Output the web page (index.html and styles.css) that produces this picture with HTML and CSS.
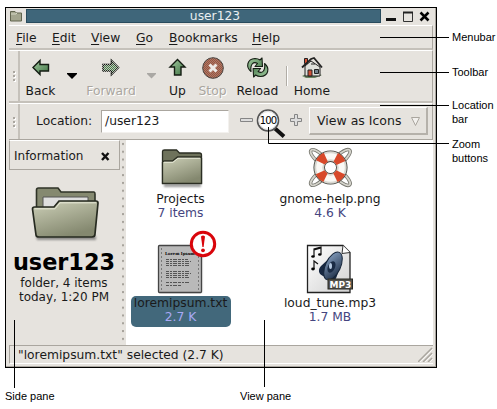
FILE: index.html
```html
<!DOCTYPE html>
<html lang="en">
<head>
<meta charset="utf-8">
<title>user123</title>
<link rel="stylesheet" href="styles.css">
</head>
<body>
<svg class="defs" width="0" height="0" aria-hidden="true">
  <defs>
    <linearGradient id="folder" x1="0" y1="0" x2="0.5" y2="1"><stop offset="0" stop-color="#cdd0b8"/><stop offset="1" stop-color="#84886f"/></linearGradient>
    <linearGradient id="green" x1="0" y1="0" x2="1" y2="1"><stop offset="0" stop-color="#a4cca2"/><stop offset="1" stop-color="#3f7343"/></linearGradient>
    <linearGradient id="page" x1="0" y1="0" x2="1" y2="1"><stop offset="0" stop-color="#fff"/><stop offset="1" stop-color="#d0d0d0"/></linearGradient>
    <linearGradient id="cone" x1="0" y1="0" x2="1" y2="1"><stop offset="0" stop-color="#8ba5c6"/><stop offset="1" stop-color="#16263e"/></linearGradient>
    <pattern id="dither" width="2" height="2" patternUnits="userSpaceOnUse"><rect width="1" height="1" fill="#e6e3de"/><rect x="1" y="1" width="1" height="1" fill="#e6e3de"/></pattern>
    <filter id="soft" x="-20%" y="-50%" width="140%" height="200%"><feGaussianBlur stdDeviation="1.2"/></filter>
  </defs>
</svg>
<main class="window">
  <header class="titlebar">
    <svg class="app-icon" width="14" height="14"><path d="M1.500 12V2.500H6L7.500 4H12.500V12Z" fill="#a3a58e" stroke="#62654f"/><path d="M2 5h5l1-1" fill="none" stroke="#d6d8c5"/></svg>
    <div class="title">user123</div>
    <svg class="window-buttons" width="50" height="15"><path d="M3 10.500h10" stroke="#111" stroke-width="3"/><path d="M20.500 3.500h9v9h-9z" fill="none" stroke="#333"/><path d="M20 3.500h10" stroke="#222" stroke-width="2"/><path d="M37.500 3.500l8 8m0-8l-8 8" stroke="#000" stroke-width="2.500"/></svg>
  </header>
  <nav class="menubar"><span class="m-file"><u>F</u>ile</span><span class="m-edit"><u>E</u>dit</span><span class="m-view"><u>V</u>iew</span><span class="m-go"><u>G</u>o</span><span class="m-book"><u>B</u>ookmarks</span><span class="m-help"><u>H</u>elp</span></nav>
  <section class="toolbar">
    <div class="grip"><i></i><i></i><i></i></div>
    <div class="tool back"><svg width="24" height="24"><path d="M4 11.500L11 4.500V8.500H19.500V15H11V18.500Z" fill="url(#green)" stroke="#141d13" stroke-width="1.400"/></svg><span>Back</span></div>
    <div class="drop"><svg width="11" height="6"><path d="M0 0h10v1L5 6 0 1z" fill="#000"/></svg></div>
    <div class="tool forward disabled"><svg width="24" height="24"><path d="M19.500 11.500L12.500 4.500V8.500H4V15H12.500V18.500Z" fill="#487a4b" stroke="#101410" stroke-width="1.600"/><path d="M21 11.500L12.500 3V8H3V16H12.500V20Z" fill="url(#dither)" opacity=".75"/></svg><span>Forward</span></div>
    <div class="drop off"><svg width="11" height="6"><path d="M1 0h9v1L5.500 5.500 1 1z" fill="#aaa8a4"/></svg></div>
    <div class="tool up"><svg width="24" height="24"><path d="M11.500 3.500L19 11H15V19H8.500V11H4Z" fill="url(#green)" stroke="#141d13" stroke-width="1.400"/></svg><span>Up</span></div>
    <div class="tool stop disabled"><svg width="24" height="24"><circle cx="12" cy="12" r="10.300" fill="#985540" stroke="#46413e"/><circle cx="12" cy="12" r="10" fill="url(#dither)" opacity=".25"/><path d="M8.500 8.500l7 7m0-7l-7 7" stroke="#eeeae6" stroke-width="3"/></svg><span>Stop</span></div>
    <div class="tool reload"><svg width="24" height="24"><g stroke="#141d13" stroke-width="1.100" fill="url(#green)" stroke-linejoin="round"><path d="M5 15.500C-.5 11 1 3 9 2.500q3 0 5 1.500l2-2 .5 8.500H9l2.500-3C7.500 5 4 8 5 15.500Z"/><path d="M5 15.500C-.5 11 1 3 9 2.500q3 0 5 1.500l2-2 .5 8.500H9l2.500-3C7.500 5 4 8 5 15.500Z" transform="rotate(180 11.800 11.500)"/></g></svg><span>Reload</span></div>
    <div class="rule"></div>
    <div class="tool home"><svg width="24" height="24"><path d="M2 20l8-4 12 3-7 3H6z" fill="#6c8662"/><path d="M5 10l6-5 9 6v9H5z" fill="#dfe0db" stroke="#222"/><path d="M4.500 2.500h3v5h-3z" fill="#d65033" stroke="#222"/><path d="M2 11.500L11 3l3-1 8 9.500" fill="none" stroke="#222" stroke-width="1.800"/><path d="M8 14h4v6H8z" fill="#ce4f37" stroke="#222"/><path d="M14.500 13.500h4v4h-4z" fill="#71818c" stroke="#222"/><path d="M11 8h4" stroke="#222"/></svg><span>Home</span></div>
  </section>
  <section class="location">
    <div class="grip"><i></i><i></i><i></i></div>
    <label>Location:</label>
    <div class="field">/user123</div>
    <svg class="zoom-controls" width="70" height="30"><path d="M5.500 10.500h12v3h-12z" fill="#ddd" stroke="#858585"/><path d="M40 20.500l9 8" stroke="#111" stroke-width="4"/><circle cx="33" cy="12.500" r="10.500" fill="#fff" stroke="#555" stroke-width="1.600"/><circle cx="33" cy="12.500" r="9" fill="none" stroke="#ddd"/><text x="24.800" y="16.200" class="zoom-text">100</text><path d="M59.500 6.500h3v4h4v3h-4v4h-3v-4h-4v-3h4z" fill="#ddd" stroke="#858585"/></svg>
    <div class="view-button"><span>View as Icons</span><svg width="11" height="11"><path d="M1.500 1.500h8L5.500 9.500z" fill="#f2f0ed" stroke="#aaa69f"/></svg></div>
  </section>
  <section class="content">
    <aside class="sidepane">
      <div class="pane-head"><span>Information</span><svg width="9" height="9"><path d="M1 1l6.500 7m0-7L1 8" stroke="#111" stroke-width="2.400"/></svg></div>
      <svg class="big-folder" width="72" height="58"><path d="M8 51h60v4H9z" fill="#555" opacity=".6" filter="url(#soft)"/><path d="M8.500 46V5q0-2 2-2H30l3 4h33q1 0 1 2v37z" fill="#858970" stroke="#2f3327" stroke-width="1.600"/><path d="M15 12h45v25H15z" fill="#dfdfdf" stroke="#555"/><path d="M8 50L4.500 24q0-2 2-2h19.500l5-6h37q2 0 2 2l-3 31q0 3-3 3H11q-3 0-3-2z" fill="url(#folder)" stroke="#262a20" stroke-width="1.700"/><path d="M6.500 23.800h20.500l5-6h36" fill="none" stroke="#e9ead9"/></svg>
      <h1>user123</h1>
      <p>folder, 4 items<br>today, 1:20 PM</p>
    </aside>
    <div class="divider"></div>
    <section class="files">
      <article class="file"><div class="art"><svg width="50" height="50"><path d="M8 43h37v3H8z" fill="#555" opacity=".6" filter="url(#soft)"/><path d="M6.500 42V10.500q0-1.500 2-1.500h12l3 3h20q2 0 2 2v28z" fill="#6e725b" stroke="#2b2e23" stroke-width="1.300"/><path d="M6.500 42.500V21q0-1 2-1h8l5-4h23q1 0 1 1v25.500z" fill="url(#folder)" stroke="#2b2e23" stroke-width="1.300"/><path d="M8 21.300h9l5-4h22" fill="none" stroke="#e6e8d6"/></svg></div><b>Projects</b><em>7 items</em></article>
      <article class="file"><div class="art"><svg width="50" height="50"><g fill="none"><path d="M14 22C-2 8 8 4 18 15M32 15C44 4 52 8 37 22M14 31C-2 45 8 49 18 38M32 38C44 49 52 45 37 31" stroke="#77776f" stroke-width="3.500"/><path d="M14 22C-2 8 8 4 18 15M32 15C44 4 52 8 37 22M14 31C-2 45 8 49 18 38M32 38C44 49 52 45 37 31" stroke="#d5d4cc" stroke-width="1.800"/><circle cx="25.500" cy="26.500" r="11.300" stroke="#44453f" stroke-width="11.500"/><circle cx="25.500" cy="26.500" r="11.300" stroke="#d9d8d1" stroke-width="9.800"/><circle cx="25.500" cy="26.500" r="11.300" stroke="#faf9f5" stroke-width="6"/><circle cx="25.500" cy="26.500" r="11.300" stroke="#d8492a" stroke-width="9.800" stroke-dasharray="7.600 10.150" transform="rotate(25.700 25.500 26.500)"/></g></svg></div><b>gnome-help.png</b><em>4.6 K</em></article>
      <article class="file selected"><div class="art"><svg width="50" height="50"><path d="M4 5h42v44H4z" fill="#777" opacity=".4" filter="url(#soft)"/><rect x="2.500" y="1.500" width="43" height="47" rx="1" fill="#b9b9b9" stroke="#444" stroke-width="1.300"/><path d="M5.500 4v42m37-42v42" stroke="#777" stroke-dasharray="2"/><text x="9" y="11" class="doc-title">Lorem Ipsum</text><path d="M10 15.500h22M10 17.500h25M10 19.500h23M10 21.500h24M10 27.500h24M10 29.500h25M10 31.500h22M10 33.500h24M10 38.500h23M10 41.500h16" stroke="#555" stroke-dasharray="3 1 2 1 4 1"/></svg><svg class="badge" width="28" height="28"><circle cx="14" cy="14" r="11.700" fill="#fff" stroke="#d9050b" stroke-width="3"/><path d="M12 6.500q2-2 4 0L14.600 17h-1.200z" fill="#d9050b"/><circle cx="14" cy="20.300" r="1.900" fill="#d9050b"/></svg></div><div class="caption"><b>loremipsum.txt</b><em>2.7 K</em></div></article>
      <article class="file"><div class="art"><svg width="50" height="50"><path d="M2.500 1.500H38l7 7v40H2.500z" fill="url(#page)" stroke="#222" stroke-width="1.300"/><path d="M38 1.500l-1 8 8-1" fill="#fff" stroke="#333"/><path d="M9 12V5l7-2v7M9 6l7-2M9 25v-8l4 3" fill="none" stroke="#111" stroke-width="1.200"/><ellipse cx="8" cy="12.500" rx="1.800" ry="1.300"/><ellipse cx="14.800" cy="10.500" rx="1.800" ry="1.300"/><ellipse cx="8" cy="25" rx="1.800" ry="1.400"/><path d="M16 22L31 8c4 2 4 24-2 29L18 32c-5-2-5-7-2-10z" fill="#172740"/><ellipse cx="28" cy="22" rx="7.500" ry="15" transform="rotate(25 28 22)" fill="url(#cone)" stroke="#15253a"/><ellipse cx="26.500" cy="23" rx="3.500" ry="6" transform="rotate(25 26.500 23)" fill="#1a2b44"/><ellipse cx="25.500" cy="22" rx="1.500" ry="3" fill="#b6c9e0"/><rect x="23" y="35" width="24.500" height="10" fill="#53534c" stroke="#282822"/><text x="24.500" y="43.500" class="mp3">MP3</text></svg></div><b>loud_tune.mp3</b><em>1.7 MB</em></article>
    </section>
  </section>
  <footer class="status"><span>"loremipsum.txt" selected (2.7 K)</span><svg width="15" height="15"><path d="M0 15L14 1M5 15l9-9m-4 9l4-4" stroke="#aaa69f" stroke-width="1.500"/><path d="M2 15L15 2M7 15l8-8m-3 8l3-3" stroke="#fff" stroke-width=".7"/></svg></footer>
</main>
<svg class="leaders" width="497" height="409"><path d="M380 37.500h69M380 72.500h69M380 105.500h69M268.500 127v16.500H449M14.500 320v68M264.500 320v67" fill="none" stroke="#000"/></svg>
<span class="callout c-menu">Menubar</span><span class="callout c-tool">Toolbar</span><span class="callout c-loc">Location<br>bar</span><span class="callout c-zoom">Zoom<br>buttons</span><span class="callout c-side">Side pane</span><span class="callout c-view">View pane</span>
</body>
</html>
```
FILE: styles.css
```css
* { box-sizing: border-box; }
body { margin: 0; width: 497px; height: 409px; padding: 7px 0 0 5px; background: #fff; color: #1a1a1a; font: 12.3px/14px "DejaVu Sans", sans-serif; overflow: hidden; position: relative; }
svg { display: block; flex: none; }
.defs { position: absolute; }
.window { width: 432px; height: 361px; border: 1px solid #000; background: #e6e3de; padding: 0 3px; display: flex; flex-direction: column; box-shadow: inset -1px -1px #aaa69f; }
.titlebar { height: 17px; display: flex; padding-top: 1px; }
.app-icon { margin-right: 3px; }
.title { width: 356px; height: 14px; background: #3f667a; border: 1px solid #294b5d; color: #e9eef0; text-align: center; line-height: 13px; padding-left: 23px; }
.window-buttons { margin-left: 2px; }
.menubar { height: 25px; display: flex; padding: 5px 0 0 7px; border-top: 1px solid #fff; border-right: 1px solid #aaa69f; border-bottom: 2px solid #c5c1ba; }
.menubar u { text-underline-offset: 2px; }
.m-file { width: 36px; } .m-edit { width: 39px; } .m-view { width: 45px; } .m-go { width: 33px; } .m-book { width: 83px; }
.toolbar { height: 53px; display: flex; border-top: 1px solid #fff; border-right: 1px solid #aaa69f; border-bottom: 2px solid #c5c1ba; }
.grip { width: 11px; height: 100%; flex: none; border-right: 2px solid #c5c1ba; display: flex; flex-direction: column; align-items: center; justify-content: center; gap: 2px; }
.grip i { width: 2px; height: 2px; background: #aaa69f; box-shadow: 1px 1px #fff; }
.tool { display: flex; flex-direction: column; align-items: center; padding-top: 5px; flex: none; }
.tool span { margin-top: 4px; }
.back { width: 41px; } .forward { width: 58px; } .up { width: 31px; } .stop { width: 39px; } .reload { width: 51px; } .home { width: 44px; }
.disabled span { color: #aaa69f; text-shadow: 1px 1px #fff; }
.drop { width: 21px; padding: 22px 0 0 6px; }
.drop.off { width: 22px; }
.rule { width: 2px; height: 20px; margin: 15px 2px 0 3px; border-left: 1px solid #b1ada6; border-right: 1px solid #fff; }
.location { height: 37px; display: flex; border-top: 1px solid #fff; border-right: 1px solid #aaa69f; border-bottom: 1px solid #aaa69f; }
.location label { width: 81px; padding: 10px 0 0 16px; }
.field { width: 128px; height: 23px; margin-top: 6px; padding: 3px 0 0 3px; background: #fff; border: 1px solid #aaa69f; border-right-color: #f3f1ee; border-bottom-color: #f3f1ee; }
.zoom-controls { margin: 4px 0 0 6px; }
.zoom-text { font: 10px "DejaVu Sans", sans-serif; letter-spacing: -.9px; fill: #000; }
.view-button { width: 119px; height: 28px; margin: 3px 0 0 4px; padding: 1px 5px 0 7px; display: flex; align-items: center; justify-content: space-between; border: 1px solid #fff; border-right: 2px solid #b5b1aa; border-bottom: 2px solid #b5b1aa; font-size: 12.5px; }
.content { height: 205px; display: flex; }
.sidepane { width: 110px; display: flex; flex-direction: column; align-items: center; }
.pane-head { width: 111px; height: 30px; border: 1px solid #aaa69f; border-top: 1px solid #fff; display: flex; align-items: center; justify-content: space-between; padding: 2px 9px 0 4px; align-self: start; font-size: 12px; }
.big-folder { margin-top: 15px; }
h1 { margin: 6px 0 0; font-size: 22.400px; line-height: 27px; color: #000; }
p { margin: 0; font-size: 12px; line-height: 14px; text-align: center; white-space: nowrap; }
.divider { width: 7px; background: radial-gradient(circle at 4px 4px, #a7a39c 1px, transparent 1.500px) 0 0 / 7px 7.800px; }
.files { width: 307px; background: #fff; display: grid; grid-template-columns: 109px 190px; grid-template-rows: 103px 102px; }
.file { display: flex; flex-direction: column; align-items: center; }
.file b, .file em { font-style: normal; font-weight: normal; line-height: 14px; white-space: nowrap; }
.file em { color: #454580; }
.art { position: relative; width: 50px; height: 50px; margin-top: 1px; margin-bottom: 1px; }
.file:nth-child(n+3) .art { margin-bottom: 2px; }
.file.selected .caption { width: 100px; height: 31px; background: #42687b; border-radius: 5px; display: flex; flex-direction: column; align-items: center; }
.file.selected em { color: #a9a9f4; }
.badge { position: absolute; left: 33px; top: -14px; }
.doc-title { font: bold 4px "DejaVu Serif", serif; }
.mp3 { font: bold 9px "DejaVu Sans", sans-serif; fill: #fff; }
.status { height: 19px; display: flex; justify-content: space-between; align-items: center; padding-left: 8px; border-top: 1px solid #aaa69f; border-left: 1px solid #aaa69f; border-bottom: 1px solid #fff; }
.leaders { position: absolute; left: 0; top: 0; }
.callout { position: absolute; font: 11px/14px "Liberation Sans", sans-serif; color: #000; white-space: nowrap; }
.c-menu { left: 452px; top: 30px; } .c-tool { left: 452px; top: 65px; } .c-loc { left: 452px; top: 98px; } .c-zoom { left: 452px; top: 137px; } .c-side { left: 5px; top: 389px; } .c-view { left: 240px; top: 389px; }
```
